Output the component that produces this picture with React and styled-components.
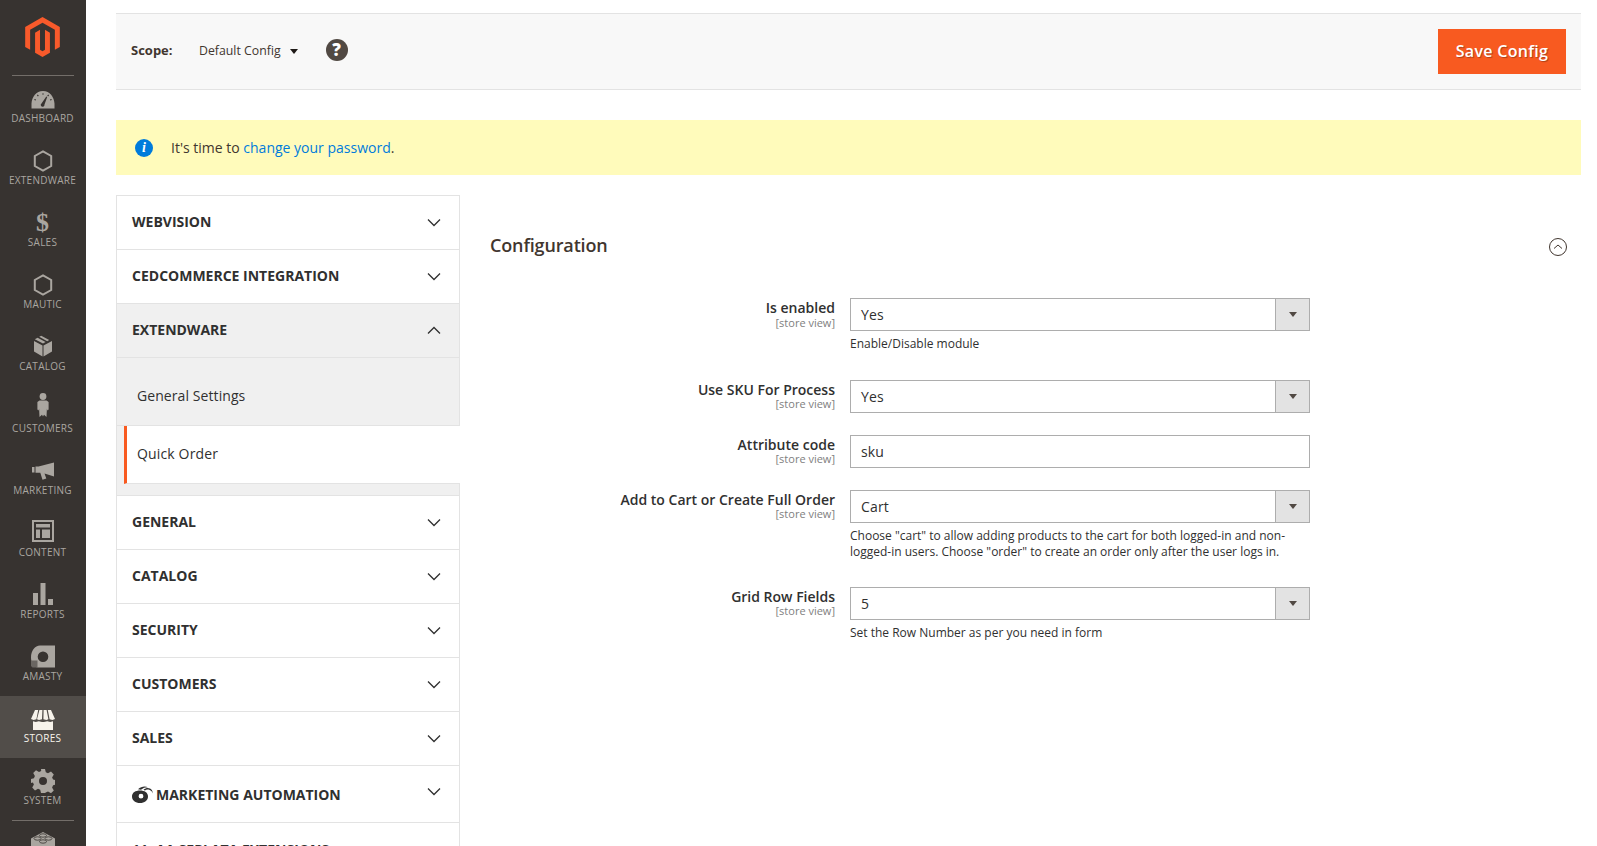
import React from "react";
import styled, { createGlobalStyle } from "styled-components";

const Global = createGlobalStyle`
  html, body { margin: 0; padding: 0; height: 846px; overflow: hidden; background: #fff; }
  body { font-family: "Open Sans", "Liberation Sans", sans-serif; color: #303030; }
  * { box-sizing: border-box; }
`;

const Page = styled.div`display: flex; height: 846px; overflow: hidden;`;

const Sidebar = styled.nav`
  width: 86px; flex: none; height: 846px; background: #373330; overflow: hidden;
`;
const LogoBox = styled.div`
  height: 75px; padding: 17px 1px 0 0; display: flex; justify-content: center;
`;
const Divider = styled.div`height: 1px; background: #736e69; margin: 0 12px;`;
const NavItem = styled.a`
  display: block; height: 62px; padding: 11px 1px 0 0; text-align: center;
  background: ${p => (p.$active ? "#514d49" : "transparent")};
  color: ${p => (p.$active ? "#f7f3eb" : "#aaa6a0")};
`;
const NavIcon = styled.div`
  height: 24px; display: flex; align-items: center; justify-content: center;
  padding-bottom: ${p => Math.max(p.$nudge || 0, 0) * 2}px;
  padding-top: ${p => Math.max(-(p.$nudge || 0), 0) * 2}px;
  font-size: 26px; font-weight: 700; line-height: 24px; font-family: "Liberation Serif", serif;
`;
const NavLabel = styled.div`
  font-size: 10px; line-height: 14px; letter-spacing: 0.25px; text-transform: uppercase;
  font-family: "Open Sans", sans-serif; white-space: nowrap;
`;

const Main = styled.main`flex: 1; min-width: 0; padding: 13px 16px 0 30px;`;

const Toolbar = styled.div`
  height: 77px; background: #f8f8f8; border-top: 1px solid #e3e3e3; border-bottom: 1px solid #e3e3e3;
  display: flex; align-items: center; padding: 0 15px 3px;
`;
const ScopeLabel = styled.span`font-size: 13px; font-weight: 700; color: #41362f; width: 68px;`;
const ScopeValue = styled.span`font-size: 12.3px; color: #41362f; margin-right: 9px;`;
const Caret = styled.span`
  width: 0; height: 0; border-left: 4.5px solid transparent; border-right: 4.5px solid transparent;
  border-top: 5px solid #1f1a17; margin-top: 3px; margin-right: 28px;
`;
const HelpIcon = styled.span`
  width: 22px; height: 22px; border-radius: 50%; background: #514943; color: #fff;
  font-size: 17px; font-weight: 800; line-height: 22px; text-align: center; display: block;
`;
const SaveButton = styled.button`
  margin: 3px 0 0 auto; width: 128px; height: 45px; background: #f85a20; border: 0; color: #fff;
  font-family: "Open Sans", sans-serif; font-size: 16px; font-weight: 600;
  text-shadow: 1px 1px 1px rgba(0,0,0,.3); padding: 0 0 2px; letter-spacing: .3px;
`;

const Banner = styled.div`
  margin-top: 30px; height: 55px; background: #fffbbb; display: flex; align-items: center;
  padding-left: 19px; font-size: 14px; color: #41362f;
`;
const InfoIcon = styled.span`
  width: 18px; height: 18px; border-radius: 50%; background: #007bdb; color: #fff; margin-right: 18px;
  font-family: "Liberation Serif", serif; font-style: italic; font-weight: 700; font-size: 14px;
  line-height: 18px; text-align: center; display: block;
`;
const Link = styled.a`color: #007bdb;`;

const Columns = styled.div`display: flex; margin-top: 20px; align-items: flex-start;`;

const Tabs = styled.div`
  width: 344px; flex: none; border: 1px solid #e3e3e3; border-bottom: 0; background: #fff;
`;
const TabHead = styled.div`
  height: ${p => p.$h || 54}px; display: flex; align-items: center; justify-content: space-between;
  padding: 0 15px;
  border-bottom: 1px solid #e3e3e3; background: ${p => (p.$open ? "#f0f0f0" : "#fff")};
  font-size: 14px; font-weight: 700; color: #303030; text-transform: uppercase;
`;
const HeadText = styled.span`
  display: flex; align-items: center; gap: 3px; margin-top: ${p => p.$shift ?? -2}px;
`;
const Chevron = styled.svg`
  width: 14px; height: 9px; fill: none; stroke: #303030; stroke-width: 1.3; margin-right: 3px; flex: none;
  margin-top: ${p => p.$lift || 0}px;
`;
const SubGroup = styled.div`background: #f0f0f0; padding-bottom: 11px; border-bottom: 1px solid #e3e3e3;`;
const SubItem = styled.div`
  height: 68px; padding: 8px 0 0 20px; display: flex; align-items: center; font-size: 14px; color: #303030;
  border-bottom: 1px solid #e3e3e3; letter-spacing: .08px;
`;
const SubItemActive = styled.div`
  height: 58px; margin-left: 7px; margin-right: -1px; padding: 0 0 2px 10px; display: flex; align-items: center;
  font-size: 14px; color: #303030; background: #fff; border-left: 3px solid #f85a20;
  border-bottom: 1px solid #e3e3e3; letter-spacing: .15px;
`;

const Content = styled.section`flex: 1; min-width: 0; padding: 0 0 0 30px;`;
const SectionHead = styled.div`
  height: 103px; padding: 34px 14px 0 0; display: flex; justify-content: space-between; align-items: flex-start;
`;
const SectionTitle = styled.h2`margin: 0; font-size: 18px; line-height: 32px; font-weight: 600; color: #41362f; letter-spacing: -.15px;`;
const CollapseIcon = styled.svg`width: 18px; height: 18px; margin-top: 9px; fill: none; stroke: #41362f; stroke-width: 1;`;

const Row = styled.div`
  display: grid; grid-template-columns: 345px 460px; column-gap: 15px; padding-bottom: ${p => p.$pb}px;
`;
const LabelCell = styled.div`text-align: right;`;
const FieldLabel = styled.div`font-size: 14px; line-height: 19px; font-weight: 600; color: #303030;`;
const Scope = styled.div`font-size: 11px; line-height: 11px; color: #808080; margin-top: ${p => (p.$loose ? 0 : -1)}px;`;
const Select = styled.div`
  height: 33px; border: 1px solid #adadad; display: flex; align-items: center; justify-content: space-between;
  font-size: 14px; color: #303030; padding-left: 10px; background: #fff; letter-spacing: .15px;
`;
const SelectArrow = styled.span`
  width: 34px; height: 31px; background: #e3e3e3; border-left: 1px solid #adadad; display: flex; align-items: center; justify-content: center;
  &::after { content: ""; border-left: 4px solid transparent; border-right: 4px solid transparent; border-top: 5px solid #514943; }
`;
const Note = styled.div`margin-top: 5px; font-size: 12px; line-height: 16.3px; color: #303030;`;

const S = ({ children, w = 24, h = 24, vb = "0 0 24 24" }) => (
  <svg width={w} height={h} viewBox={vb} fill="currentColor" aria-hidden="true">{children}</svg>
);

const Gauge = () => (
  <S vb="0 0 24 18" h={18}>
    <path fillRule="evenodd" d="M12 0C5 0 1 6 .5 12.5V17.5h23v-5C23 6 19 0 12 0zm5.2 3.6l.9.7-1 1.2-.9-.7zM6.8 3.6l1 1.2-.9.7-1-1.2zM11.5 2.2h1v1.6h-1zM3.6 8l1.5.6-.4 1-1.5-.6zm16.8 0l.4 1-1.5.6-.4-1zM15.3 5.6l.9.5-2.7 7.5a1.9 1.9 0 1 1-3-1.2z" />
  </S>
);
const Hex = () => (
  <S w={20} h={22} vb="0 0 20 22">
    <path d="M10 1.4 18.2 6v10L10 20.6 1.8 16V6z" fill="none" stroke="currentColor" strokeWidth="2" />
  </S>
);
const Box = () => (
  <S w={20} h={22} vb="0 0 20 22">
    <path d="M9.5 10.4v11L1 16.6V6zM10.5 10.4 19 6v10.6l-8.5 4.8zM6.2 1.8 8.2.8l8 4.3-2 1.1zM4.6 2.7l8 4.3-2.6 1.4L1.8 4.3z" />
  </S>
);
const Person = () => (
  <S w={12} h={24} vb="0 0 12 24">
    <circle cx="6" cy="3.5" r="3.4" />
    <path d="M2.5 7.5h7L11.6 9v7.5l-1.2 1-.5-1.8-.4 8.3L7 21.7 6 23.5 5 21.7 2.5 24l-.4-8.3-.5 1.8L.4 16.5V9z" />
  </S>
);
const Megaphone = () => (
  <S w={22} h={18} vb="0 0 22 18">
    <path d="M0 5h2.500v5.500H0zM3.500 4.500h3L22 .5V14.500L12.500 11.500l1.800 5-3.800 1.200-2.200-7H3.500z" />
  </S>
);
const Layout = () => (
  <S w={22} h={22} vb="0 0 22 22">
    <path fillRule="evenodd" d="M0 0h22v22H0zm2 2v18h18V2zM4 4h14v3.500H4zM4 9.500h4V18H4zM10 9.500h8V18h-8z" />
  </S>
);
const Bars = () => (
  <S w={20} h={22} vb="0 0 20 22">
    <path d="M0 10h5v12H0zM7.500 0h5v22h-5zM15 16h5v6h-5z" />
  </S>
);
const Amasty = () => (
  <S w={24} h={23} vb="0 0 24 23">
    <path fillRule="evenodd" d="M9 .5h15v22H7C3 22.500 0 18 0 12.500 0 5.500 4 .5 9 .5zm3 6a5.300 5.300 0 1 0 0 10.600 5.300 5.300 0 0 0 0-10.600z" />
    <path d="M0 15.500h6.500v7H1.500L0 21z" fill="#6a6662" />
  </S>
);
const Store = () => (
  <S w={24} h={20} vb="0 0 24 20">
    <path d="M4 0h3.200L5.400 9.300 2.600 10 0 9zM8.400 0h3l-.4 9.300-3 .7-2-.8zM12.600 0h3l1.800 9.200-2 .8-3-.7zM16.800 0H20l4 9-2.600 1-2.800-.7zM2 11.300l2.800.7 3-.7 3.200.7h2l3.200-.7 3 .7 2.800-.7V20H2z" />
  </S>
);
const Gear = () => (
  <S w={24} h={24} vb="0 0 24 24">
    <path fillRule="evenodd" d="M10 0h4l.8 3.300 2.200 1 3-1.700 2.800 2.800-1.700 3 1 2.200 3.300.8v4l-3.300.8-1 2.200 1.700 3-2.800 2.800-3-1.700-2.200 1L14 24h-4l-.8-3.300-2.200-1-3 1.700-2.800-2.800 1.700-3-1-2.200L-.4 14v-4l3.300-.8 1-2.200-1.700-3L5 1.200l3 1.700 2.200-1zM12 8a4 4 0 1 0 0 8 4 4 0 0 0 0-8z" />
  </S>
);
const Bricks = () => (
  <S w={24} h={24} vb="0 0 24 24">
    <path d="M12 0 24 6.500V17L12 24 0 17V6.500z" />
    <g fill="none" stroke="#373330" strokeWidth=".8">
      <ellipse cx="12" cy="3.500" rx="3.500" ry="1.700" />
      <ellipse cx="6.500" cy="6.500" rx="3.500" ry="1.700" />
      <ellipse cx="17.500" cy="6.500" rx="3.500" ry="1.700" />
      <ellipse cx="12" cy="9.500" rx="3.500" ry="1.700" />
    </g>
  </S>
);

const nav = [
  { label: "Dashboard", icon: <Gauge />, nudge: -1 },
  { label: "Extendware", icon: <Hex /> },
  { label: "Sales", icon: "$" },
  { label: "Mautic", icon: <Hex /> },
  { label: "Catalog", icon: <Box />, nudge: 1 },
  { label: "Customers", icon: <Person />, nudge: 4 },
  { label: "Marketing", icon: <Megaphone /> },
  { label: "Content", icon: <Layout />, nudge: 2 },
  { label: "Reports", icon: <Bars />, nudge: 1 },
  { label: "Amasty", icon: <Amasty />, nudge: 1 },
  { label: "Stores", icon: <Store />, nudge: -1, active: true },
  { label: "System", icon: <Gear /> },
];

const Down = ({ lift }) => <Chevron $lift={lift} viewBox="0 0 14 9"><path d="M1 1.500 7 7.500 13 1.500" /></Chevron>;
const Up = () => <Chevron viewBox="0 0 14 9"><path d="M1 7.500 7 1.500 13 7.500" /></Chevron>;

const Tab = ({ children }) => <TabHead><HeadText>{children}</HeadText><Down /></TabHead>;

const Cloud = () => (
  <svg width="21" height="17" viewBox="0 0 21 17" fill="#303030" aria-hidden="true">
    <path fillRule="evenodd" d="M8 4.500c4.500 0 8 2 8 6s-3.500 6.500-8 6.500-8-2.500-8-6.500 3.500-6 8-6zm1 3.300a2.400 2.400 0 1 0 0 4.800 2.400 2.400 0 0 0 0-4.800z" />
    <path d="M6 3.300C9 .5 13 0 16 1.300c-2.500-.1-5 .7-7 2.500zM11.500 3.800c2-1.800 4.500-2.300 6.500-1.300 1.800.9 2.700 2.800 3 5-1.200-2.500-2.700-3.600-4.500-3.900-1.600-.3-2.800 0-3.500.9z" />
  </svg>
);

const Field = ({ label, type = "select", value, note, pb, loose }) => (
  <Row $pb={pb}>
    <LabelCell>
      <FieldLabel>{label}</FieldLabel>
      <Scope $loose={loose}>[store view]</Scope>
    </LabelCell>
    <div>
      <Select>{value}{type === "select" && <SelectArrow />}</Select>
      {note && <Note>{note}</Note>}
    </div>
  </Row>
);

export default function App() {
  return (
    <Page>
      <Global />
      <Sidebar>
        <LogoBox>
          <svg width="35" height="40" viewBox="1.600 0 20.800 24" aria-label="Magento">
            <path fill="#f85a2b" d="M12 24l-4.455-2.572v-12l2.970-1.715v12.001l1.485.902 1.485-.902V7.713l2.970 1.715v12L12 24zM22.391 6v12l-2.969 1.714V7.713L12 3.430 4.574 7.713v12.001L1.609 18V6L12 0l10.391 6z" />
          </svg>
        </LogoBox>
        <Divider />
        {nav.map(({ label, icon, nudge, active }) => (
          <NavItem key={label} $active={active}>
            <NavIcon $nudge={nudge}>{icon}</NavIcon>
            <NavLabel>{label}</NavLabel>
          </NavItem>
        ))}
        <Divider />
        <NavItem><NavIcon><Bricks /></NavIcon></NavItem>
      </Sidebar>

      <Main>
        <Toolbar>
          <ScopeLabel>Scope:</ScopeLabel>
          <ScopeValue>Default Config</ScopeValue>
          <Caret />
          <HelpIcon>?</HelpIcon>
          <SaveButton>Save Config</SaveButton>
        </Toolbar>
        <Banner>
          <InfoIcon>i</InfoIcon>
          <span>It's time to <Link>change your password</Link>.</span>
        </Banner>
        <Columns>
          <Tabs>
            <Tab>Webvision</Tab>
            <Tab>Cedcommerce Integration</Tab>
            <TabHead $open><HeadText>Extendware</HeadText><Up /></TabHead>
            <SubGroup>
              <SubItem>General Settings</SubItem>
              <SubItemActive>Quick Order</SubItemActive>
            </SubGroup>
            <Tab>General</Tab>
            <Tab>Catalog</Tab>
            <Tab>Security</Tab>
            <Tab>Customers</Tab>
            <Tab>Sales</Tab>
            <TabHead $h={57}><HeadText $shift={1}><Cloud />Marketing Automation</HeadText><Down lift={-5} /></TabHead>
            <TabHead $h={58}><HeadText $shift={-4}>11. AA Seplata Extensions</HeadText><Down /></TabHead>
          </Tabs>
          <Content>
            <SectionHead>
              <SectionTitle>Configuration</SectionTitle>
              <CollapseIcon viewBox="0 0 18 18">
                <circle cx="9" cy="9" r="8.500" />
                <path d="M5 10.500 9 7l4 3.500" />
              </CollapseIcon>
            </SectionHead>
            <Field label="Is enabled" value="Yes" note="Enable/Disable module" pb={27.7} loose />
            <Field label="Use SKU For Process" value="Yes" pb={22} />
            <Field label="Attribute code" type="text" value="sku" pb={22} />
            <Field
              label="Add to Cart or Create Full Order"
              value="Cart"
              note={<>Choose "cart" to allow adding products to the cart for both logged-in and non-<br />logged-in users. Choose "order" to create an order only after the user logs in.</>}
              pb={26.4}
            />
            <Field label="Grid Row Fields" value="5" note="Set the Row Number as per you need in form" pb={0} />
          </Content>
        </Columns>
      </Main>
    </Page>
  );
}
